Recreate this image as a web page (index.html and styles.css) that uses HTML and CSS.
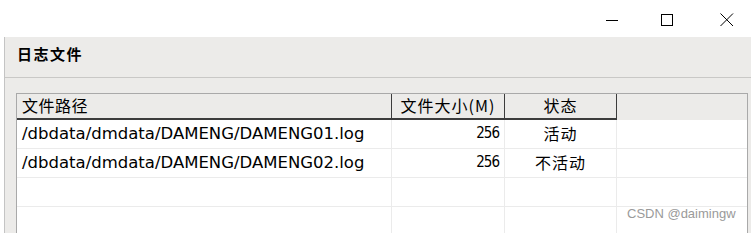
FILE: index.html
```html
<!DOCTYPE html>
<html lang="zh">
<head>
    <meta charset="UTF-8">
    <title>日志文件</title>
    <link rel="stylesheet" href="styles.css">
</head>
<body>
    <div class="titlebar">
        <div class="win-controls">
            <span class="win-btn" aria-label="最小化">
                <svg width="13" height="13" viewBox="0 0 13 13"><path d="M0 6.5H12" stroke="#000" stroke-width="1"/></svg>
            </span>
            <span class="win-btn" aria-label="最大化">
                <svg width="13" height="13" viewBox="0 0 13 13"><rect x="0.5" y="0.5" width="11" height="11" fill="none" stroke="#000" stroke-width="1"/></svg>
            </span>
            <span class="win-btn" aria-label="关闭">
                <svg width="14" height="14" viewBox="0 0 14 14"><path d="M0.5 0.5L13 13M13 0.5L0.5 13" stroke="#000" stroke-width="1"/></svg>
            </span>
        </div>
    </div>

    <div class="panel">
        <div class="panel-head">
            <h2 class="panel-title">日志文件</h2>
        </div>
        <div class="panel-body">
            <div class="log-table">
                <div class="cell head first">文件路径</div>
                <div class="cell head center">文件大小(M)</div>
                <div class="cell head center">状态</div>
                <div class="cell head blank"></div>

                <div class="cell path">/dbdata/dmdata/DAMENG/DAMENG01.log</div>
                <div class="cell num">256</div>
                <div class="cell center">活动</div>
                <div class="cell"></div>

                <div class="cell path">/dbdata/dmdata/DAMENG/DAMENG02.log</div>
                <div class="cell num">256</div>
                <div class="cell center">不活动</div>
                <div class="cell"></div>

                <div class="cell"></div>
                <div class="cell"></div>
                <div class="cell"></div>
                <div class="cell"></div>

                <div class="cell"></div>
                <div class="cell"></div>
                <div class="cell"></div>
                <div class="cell"></div>
            </div>
        </div>
        <div class="watermark">CSDN @daimingw</div>
    </div>
</body>
</html>
```

FILE: styles.css
```css
body {
    margin: 0;
    background: #ffffff;
    font-family: "DejaVu Sans", "Noto Sans CJK SC", sans-serif;
    color: #000;
    overflow: hidden;
}
.titlebar {
    height: 37px;
    display: flex;
    justify-content: flex-end;
}
.win-controls {
    display: flex;
    align-items: flex-start;
    padding-top: 12px;
    padding-right: 17px;
    gap: 44px;
}
.win-btn {
    display: block;
    height: 13px;
}
.win-btn:nth-child(2) {
    margin-left: -2px;
    margin-right: 2px;
}
.panel {
    position: relative;
    margin-left: 4px;
    border-left: 1px solid #c4c4c4;
    background: #ecebe9;
    height: 196px;
}
.panel-head {
    height: 40px;
    border-bottom: 1px solid #c9c8c6;
}
.panel-title {
    margin: 0;
    padding: 6px 0 0 12px;
    font-family: "Noto Sans CJK SC", sans-serif;
    font-size: 15px;
    font-weight: 700;
    letter-spacing: 1.5px;
    line-height: 22px;
}
.panel-body {
    padding: 15px 0 0 11px;
}
.log-table {
    width: 730px;
    display: grid;
    grid-template-columns: 375px 113px 112px 1fr;
    grid-auto-rows: 29px;
    grid-template-rows: 26px;
    border-top: 1px solid #a9a9a9;
    border-left: 1px solid #a9a9a9;
    border-right: 1px solid #a9a9a9;
    background: #ffffff;
}
.cell {
    border-right: 1px solid #ebebeb;
    border-bottom: 1px solid #ebebeb;
    font-size: 16px;
    line-height: 27px;
    padding: 0 4px;
    white-space: nowrap;
    overflow: hidden;
}
.cell:nth-child(4n) {
    border-right: none;
}
.head {
    background: #ecebe9;
    border-right: 1px solid #3c3c3c;
    border-bottom: 2px solid #3c3c3c;
    font-family: "Noto Sans CJK SC", sans-serif;
    font-size: 15px;
    line-height: 23px;
    letter-spacing: 1px;
}
.head.first {
    padding-left: 5px;
    font-size: 16px;
    letter-spacing: 0.5px;
}
.head.blank {
    border-right: none;
    border-bottom: 1px solid #ecebe9;
}
.path {
    padding-left: 5px;
    font-size: 16.5px;
}
.num {
    text-align: right;
    font-size: 15px;
    font-stretch: condensed;
    letter-spacing: -1px;
    padding-right: 5px;
}
.center {
    text-align: center;
    font-family: "Noto Sans CJK SC", sans-serif;
    font-size: 16px;
    letter-spacing: 1px;
}
.head.center {
    font-size: 16px;
}
.watermark {
    position: absolute;
    left: 622px;
    top: 169px;
    font-family: "Liberation Sans", sans-serif;
    font-size: 13px;
    color: #9a9a9a;
}
```
